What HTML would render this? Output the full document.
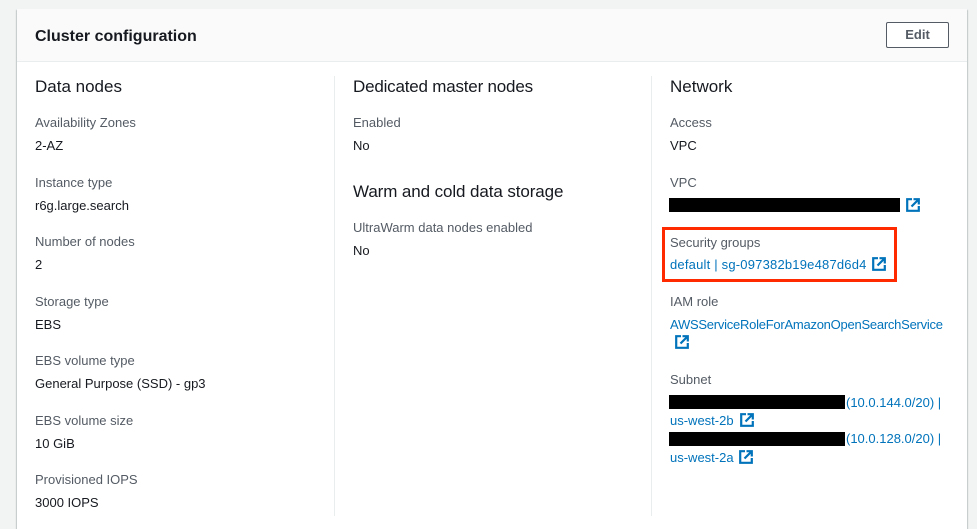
<!DOCTYPE html>
<html><head><meta charset="utf-8"><style>
*{margin:0;padding:0;box-sizing:border-box}
body{width:977px;height:510px;background:#f2f3f3;font-family:"Liberation Sans",Arial,sans-serif;position:relative;overflow:hidden}
.card{position:absolute;left:17px;top:9px;width:950px;height:520px;background:#fff;box-shadow:0 1px 1px rgba(0,28,36,.3),1px 1px 1px rgba(0,28,36,.15),-1px 1px 1px rgba(0,28,36,.15)}
.hdr{position:absolute;left:0;top:0;width:950px;height:53px;background:#fafafa;border-bottom:1px solid #eaeded}
.t{position:absolute;white-space:nowrap;line-height:16px;font-size:13px;margin-top:1px}
.title{font-size:16px;font-weight:bold;color:#16191f;line-height:20px}
.h{font-size:17px;color:#16191f;line-height:20px}
.l{color:#545b64}
.v{color:#16191f}
.a{color:#0073bb}
.div{position:absolute;top:76px;width:1px;height:440px;background:#eaeded}
.btn{position:absolute;left:886px;top:22px;width:63px;height:26px;border:1px solid #545b64;border-radius:2px;background:#fff;font-size:13px;font-weight:bold;color:#545b64;text-align:center;line-height:24px}
.bar{position:absolute;background:#000;height:14px}
.ic{position:absolute;width:14px;height:14px}
.red{position:absolute;left:662px;top:227px;width:235px;height:55px;border:3px solid #ff2a00}
</style></head><body>
<div class="card"><div class="hdr"></div></div>
<div class="t title" style="left:35px;top:26px">Cluster configuration</div>
<div class="btn">Edit</div>
<div class="div" style="left:334px"></div>
<div class="div" style="left:651px"></div>

<div class="t h" style="left:35px;top:76px">Data nodes</div>
<div class="t l" style="left:35px;top:114px">Availability Zones</div>
<div class="t v" style="left:35px;top:137px">2-AZ</div>
<div class="t l" style="left:35px;top:174px">Instance type</div>
<div class="t v" style="left:35px;top:197px">r6g.large.search</div>
<div class="t l" style="left:35px;top:233px">Number of nodes</div>
<div class="t v" style="left:35px;top:256px">2</div>
<div class="t l" style="left:35px;top:293px">Storage type</div>
<div class="t v" style="left:35px;top:316px">EBS</div>
<div class="t l" style="left:35px;top:352px">EBS volume type</div>
<div class="t v" style="left:35px;top:375px">General Purpose (SSD) - gp3</div>
<div class="t l" style="left:35px;top:412px">EBS volume size</div>
<div class="t v" style="left:35px;top:435px">10 GiB</div>
<div class="t l" style="left:35px;top:471px">Provisioned IOPS</div>
<div class="t v" style="left:35px;top:494px">3000 IOPS</div>

<div class="t h" style="left:353px;top:76px;letter-spacing:-0.2px">Dedicated master nodes</div>
<div class="t l" style="left:353px;top:114px">Enabled</div>
<div class="t v" style="left:353px;top:137px">No</div>
<div class="t h" style="left:353px;top:181px;letter-spacing:-0.1px">Warm and cold data storage</div>
<div class="t l" style="left:353px;top:219px">UltraWarm data nodes enabled</div>
<div class="t v" style="left:353px;top:242px">No</div>

<svg width="0" height="0" style="position:absolute"><defs><symbol id="ext" viewBox="0 0 14 14"><path d="M6 1.2H1.2v11.6h11.6V8" fill="none" stroke="#0073bb" stroke-width="2.2"/><path d="M5.5 8.5L12 2M7.5 1.2h5.3v5.3" fill="none" stroke="#0073bb" stroke-width="2.2"/></symbol></defs></svg>

<div class="t h" style="left:670px;top:76px">Network</div>
<div class="t l" style="left:670px;top:114px">Access</div>
<div class="t v" style="left:670px;top:137px">VPC</div>
<div class="t l" style="left:670px;top:174px">VPC</div>
<div class="bar" style="left:669px;top:198px;width:231px"></div>
<svg class="ic" style="left:906px;top:198px"><use href="#ext"/></svg>
<div class="red"></div>
<div class="t l" style="left:670px;top:234px">Security groups</div>
<div class="t a" style="left:670px;top:256px;letter-spacing:0.2px">default | sg-097382b19e487d6d4</div>
<svg class="ic" style="left:872px;top:257px"><use href="#ext"/></svg>
<div class="t l" style="left:670px;top:293px">IAM role</div>
<div class="t a" style="left:670px;top:316px;letter-spacing:-0.25px">AWSServiceRoleForAmazonOpenSearchService</div>
<svg class="ic" style="left:675px;top:335px"><use href="#ext"/></svg>
<div class="t l" style="left:670px;top:371px">Subnet</div>
<div class="bar" style="left:669px;top:395px;width:176px"></div>
<div class="t a" style="left:846px;top:394px">(10.0.144.0/20) |</div>
<div class="t a" style="left:670px;top:412px">us-west-2b</div>
<svg class="ic" style="left:740px;top:413px"><use href="#ext"/></svg>
<div class="bar" style="left:669px;top:432px;width:176px"></div>
<div class="t a" style="left:846px;top:430px">(10.0.128.0/20) |</div>
<div class="t a" style="left:670px;top:449px">us-west-2a</div>
<svg class="ic" style="left:739px;top:450px"><use href="#ext"/></svg>
</body></html>
